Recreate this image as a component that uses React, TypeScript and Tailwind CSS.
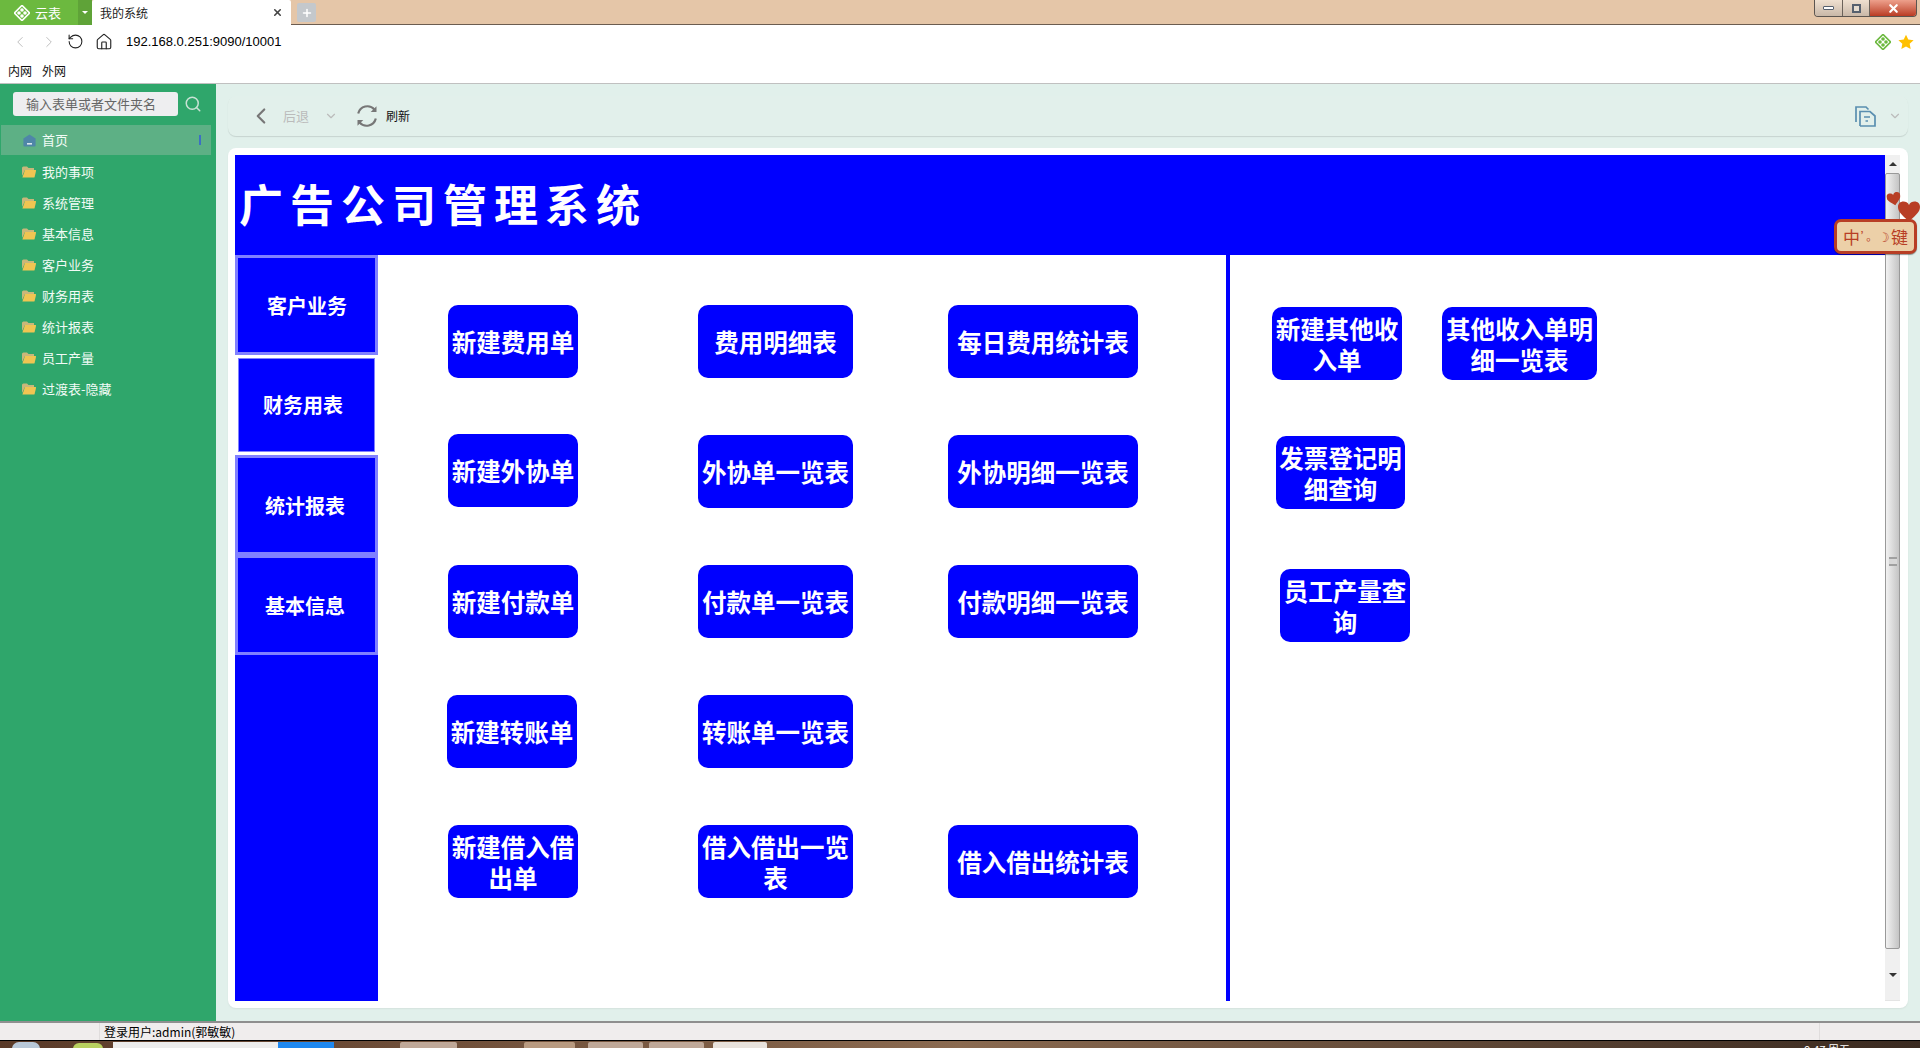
import { ChevronDown, ChevronLeft, ChevronRight, Home, RotateCcw, Search, X, Plus } from 'lucide-react';
import type { ReactNode } from 'react';

const menuItems = ['我的事项', '系统管理', '基本信息', '客户业务', '财务用表', '统计报表', '员工产量', '过渡表-隐藏'];

const leftRows = [
  [
    { label: '新建费用单', width: 'w-[130px]' },
    { label: '费用明细表', width: 'w-[155px]' },
    { label: '每日费用统计表', width: 'w-[190px]' },
  ],
  [
    { label: '新建外协单', width: 'w-[130px]', extra: '-mt-px' },
    { label: '外协单一览表', width: 'w-[155px]' },
    { label: '外协明细一览表', width: 'w-[190px]' },
  ],
  [
    { label: '新建付款单', width: 'w-[130px]' },
    { label: '付款单一览表', width: 'w-[155px]' },
    { label: '付款明细一览表', width: 'w-[190px]' },
  ],
  [
    { label: '新建转账单', width: 'w-[130px]', extra: '-ml-px' },
    { label: '转账单一览表', width: 'w-[155px]' },
  ],
  [
    { label: '新建借入借出单', width: 'w-[130px]' },
    { label: '借入借出一览表', width: 'w-[155px]' },
    { label: '借入借出统计表', width: 'w-[190px]' },
  ],
];

function Logo({ size = 16 }: { size?: number }) {
  return (
    <svg width={size} height={size} viewBox="0 0 16 16">
      <rect x="2.6" y="2.6" width="10.8" height="10.8" transform="rotate(45 8 8)" fill="none" stroke="currentColor" strokeWidth="1.6" />
      <circle cx="8" cy="5" r="1.8" fill="currentColor" />
      <circle cx="8" cy="11" r="1.8" fill="currentColor" />
      <circle cx="5" cy="8" r="1.8" fill="currentColor" />
      <circle cx="11" cy="8" r="1.8" fill="currentColor" />
    </svg>
  );
}

function FolderIcon() {
  return (
    <svg width="14" height="12" viewBox="0 0 14 12">
      <path d="M0 2 Q0 0.5 1.5 0.5 H5 L6.5 2 H12 V4 H3 L0 10 Z" fill="#c9b77a" />
      <path d="M3 4 H13.6 Q14.2 4 14 5 L12.6 11 Q12.4 11.6 11.8 11.6 H0.4 Z" fill="#f0c552" />
    </svg>
  );
}

function HouseIcon() {
  return (
    <svg width="13" height="13" viewBox="0 0 13 13">
      <path d="M6.5 0.5 L12.6 4.6 V11.5 Q12.6 12.6 11.5 12.6 H1.5 Q0.4 12.6 0.4 11.5 V4.6 Z" fill="#4f86a8" />
      <rect x="4" y="9" width="5" height="1.6" fill="#dbe8ee" />
    </svg>
  );
}

function RefreshIcon() {
  return (
    <svg width="24" height="24" viewBox="0 0 24 24" fill="none" stroke="#777777" strokeWidth="2.2">
      <path d="M3.2 9.5 A9.4 9.4 0 0 1 19.5 5.6" />
      <path d="M20.8 14.5 A9.4 9.4 0 0 1 4.5 18.4" />
      <path d="M21.5 2.2 V8 H15.7 Z" fill="#777777" stroke="none" />
      <path d="M2.5 21.8 V16 H8.3 Z" fill="#777777" stroke="none" />
    </svg>
  );
}

function PagesIcon() {
  return (
    <svg width="21" height="21" viewBox="0 0 21 21" fill="none" stroke="#5a8fb0" strokeWidth="1.7">
      <path d="M1 16 V1 H11 L13.5 3.5" />
      <path d="M5 20 V5.5 H15 L20 10 V20 H5" />
      <path d="M9 11 H15 M10.5 15 H13" />
    </svg>
  );
}

function Heart({ className }: { className: string }) {
  return (
    <svg className={className} viewBox="0 0 20 18">
      <path d="M10 18 C3 12 0 9 0 5 C0 2 2 0 5 0 C7 0 9 1 10 3 C11 1 13 0 15 0 C18 0 20 2 20 5 C20 9 17 12 10 18 Z" fill="#b83e25" />
    </svg>
  );
}

function FuncButton({ label, width, extra = '' }: { label: string; width: string; extra?: string }) {
  return (
    <div className={`${width} ${extra} flex h-[73px] items-center justify-center rounded-[10px] bg-[#0000ff] text-center text-[24.5px] leading-[31px] font-bold text-white`}>
      {label}
    </div>
  );
}

function SideTab({ children, className }: { children: ReactNode; className: string }) {
  return <div className={`flex items-center justify-center bg-[#0000ff] text-[20px] font-bold text-white ${className}`}>{children}</div>;
}

function BrowserChrome() {
  return (
    <div className="shrink-0 bg-white">
      <div className="flex h-[25px] items-stretch border-b border-[#6b5c50] bg-[#e5c6a8]">
        <div className="flex h-[25px] w-[78px] items-center gap-[5px] bg-[#6cb93f] pl-[14px] text-[13px] text-white">
          <Logo />
          <span>云表</span>
        </div>
        <div className="flex h-[25px] w-[14px] items-center justify-center bg-[#5fa338]">
          <div className="h-0 w-0 border-x-[3px] border-t-[3px] border-x-transparent border-t-white" />
        </div>
        <div className="flex h-[25px] w-[199px] items-center justify-between rounded-t-[2px] bg-white pr-[8px] pl-[8px] text-[12px] text-[#222222]">
          <span>我的系统</span>
          <X size={11} strokeWidth={3.5} className="text-[#444444]" />
        </div>
        <div className="mt-[3px] ml-[6px] flex h-[19px] w-[19px] items-center justify-center rounded-[2px] bg-[#c4c8cc]">
          <Plus size={12} strokeWidth={3} className="text-white" />
        </div>
        <div className="ml-auto mr-[3px] flex h-[17px] w-[103px] overflow-hidden rounded-b-[4px] border border-t-0 border-[#5c5550] text-[#56606e]">
          <div className="flex w-[28px] items-center justify-center border-r border-[#6b625a] bg-gradient-to-b from-[#efe0d0] to-[#c9b8a8]">
            <div className="h-[4px] w-[11px] rounded-[1px] border border-[#56606e] bg-white" />
          </div>
          <div className="flex w-[27px] items-center justify-center border-r border-[#6b625a] bg-gradient-to-b from-[#efe0d0] to-[#c9b8a8]">
            <div className="h-[9px] w-[9px] border-2 border-[#56606e] bg-[#e5dcd0]" />
          </div>
          <div className="flex flex-1 items-center justify-center bg-gradient-to-b from-[#eda08c] to-[#b93a22]">
            <X size={13} strokeWidth={4} className="text-white" />
          </div>
        </div>
      </div>
      <div className="flex h-[33px] items-center pr-[6px] pl-[11px] text-[13px] text-black">
        <ChevronLeft size={18} strokeWidth={1} className="text-[#aaaaaa]" />
        <ChevronRight size={18} strokeWidth={1} className="ml-[11px] text-[#aaaaaa]" />
        <RotateCcw size={17} strokeWidth={1.5} className="ml-[9px] text-[#222222]" />
        <Home size={18} strokeWidth={1.5} className="ml-[11px] text-[#222222]" />
        <span className="ml-[13px] font-['Liberation_Sans',sans-serif]">192.168.0.251:9090/10001</span>
        <span className="ml-auto text-[#6cb93f]">
          <Logo />
        </span>
        <svg width="16" height="16" viewBox="0 0 24 24" className="ml-[7px]">
          <path d="M12 1 L15.4 8.3 L23.4 9.3 L17.5 14.7 L19 22.6 L12 18.7 L5 22.6 L6.5 14.7 L0.6 9.3 L8.6 8.3 Z" fill="#ffc000" />
        </svg>
      </div>
      <div className="flex h-[26px] items-center gap-[10px] border-b border-[#c0c0c0] pl-[8px] text-[12px] text-[#111111]">
        <span>内网</span>
        <span>外网</span>
      </div>
    </div>
  );
}

function Sidebar() {
  return (
    <aside className="w-[216px] shrink-0 bg-[#2fa66b] pt-[8px] text-[13px] text-[#f2fbf6]">
      <div className="flex items-center pl-[13px]">
        <div className="flex h-[24px] w-[165px] items-center rounded-[3px] bg-[#eeeef0] pl-[13px] text-[#666666]">输入表单或者文件夹名</div>
        <Search size={18} strokeWidth={2} className="ml-[6px] text-[#c8e2d4]" />
      </div>
      <div className="mt-[9px] ml-px flex h-[30px] w-[210px] items-center bg-[#5db085] pr-[10px] pl-[22px]">
        <HouseIcon />
        <span className="ml-[6px]">首页</span>
        <div className="ml-auto h-[10px] w-[2px] bg-[#3c6fc4]" />
      </div>
      <div className="mt-[1px]">
        {menuItems.map((item) => (
          <div key={item} className="flex h-[31px] items-center pl-[22px]">
            <FolderIcon />
            <span className="ml-[6px]">{item}</span>
          </div>
        ))}
      </div>
    </aside>
  );
}

function Toolbar() {
  return (
    <div className="flex h-[40px] items-center rounded-[8px] bg-[#e2f0eb] pr-[6px] pl-[20px] shadow-[0_1px_1px_rgba(0,0,0,0.12)]">
      <ChevronLeft size={26} strokeWidth={2} className="text-[#777777]" />
      <span className="ml-[9px] text-[13px] text-[#bbbbbb]">后退</span>
      <ChevronDown size={14} strokeWidth={2} className="ml-[15px] text-[#bbbbbb]" />
      <div className="ml-[17px]">
        <RefreshIcon />
      </div>
      <span className="ml-[7px] text-[12px] text-[#111111]">刷新</span>
      <div className="ml-auto">
        <PagesIcon />
      </div>
      <ChevronDown size={14} strokeWidth={2} className="ml-[12px] text-[#bbbbbb]" />
    </div>
  );
}

function Scrollbar() {
  return (
    <div className="flex w-[15px] flex-col bg-[#f0f0f0]">
      <div className="flex h-[18px] items-center justify-center">
        <div className="h-0 w-0 border-x-[4px] border-b-[4px] border-x-transparent border-b-[#333333]" />
      </div>
      <div className="flex h-[776px] items-center justify-center rounded-[2px] border border-[#999999] bg-gradient-to-r from-[#f2f2f2] to-[#c4c4c4]">
        <div className="h-[9px] w-[8px] border-y-2 border-[#a0a0a0] bg-[#d8d8d8]" />
      </div>
      <div className="flex flex-1 items-center justify-center border-b border-[#e4e4e4]">
        <div className="h-0 w-0 border-x-[4px] border-t-[4px] border-x-transparent border-t-[#333333]" />
      </div>
    </div>
  );
}

function LeftPanel() {
  return (
    <div className="flex w-[143px] shrink-0 flex-col bg-white">
      <SideTab className="h-[100px] border-[3px] border-[#8080ff] pt-[1px] pl-[1px]">客户业务</SideTab>
      <div className="h-[100px] px-[3px] py-[3px]">
        <SideTab className="h-[94px] border border-[#8080ff] pr-[7px]">财务用表</SideTab>
      </div>
      <SideTab className="h-[100px] border-[3px] border-[#8080ff] pt-[2px] pr-[3px]">统计报表</SideTab>
      <SideTab className="h-[100px] border-[3px] border-[#8080ff] pt-[2px] pr-[3px]">基本信息</SideTab>
      <div className="flex-1 bg-[#0000ff]" />
    </div>
  );
}

function MainGrid() {
  return (
    <div className="flex w-[848px] shrink-0 flex-col gap-[57px] pt-[50px] pl-[70px]">
      {leftRows.map((row, i) => (
        <div key={i} className="grid h-[73px] grid-cols-[250px_250px_250px]">
          {row.map((b) => (
            <FuncButton key={b.label} {...b} />
          ))}
        </div>
      ))}
    </div>
  );
}

function RightPanel() {
  return (
    <div className="flex-1 border-l-4 border-[#0000ff] pt-[52px] pl-[42px]">
      <div className="flex gap-[40px]">
        <FuncButton label="新建其他收入单" width="w-[130px]" />
        <FuncButton label="其他收入单明细一览表" width="w-[155px]" />
      </div>
      <div className="mt-[56px] ml-[4px]">
        <FuncButton label="发票登记明细查询" width="w-[129px]" />
      </div>
      <div className="mt-[60px] ml-[8px]">
        <FuncButton label="员工产量查询" width="w-[130px]" />
      </div>
    </div>
  );
}

function ImeBadge() {
  return (
    <div className="absolute top-[192px] right-0 h-[63px] w-[86px]">
      <Heart className="absolute top-0 left-[53px] h-[14px] w-[14px] -rotate-12" />
      <Heart className="absolute top-[9px] left-[64px] h-[21px] w-[22px]" />
      <div className="absolute top-[27px] left-0 flex h-[35px] w-[83px] items-center justify-between rounded-[7px] border-[3px] border-[#b83e25] bg-[#ecd0a8] px-[6px] text-[17px] leading-none text-[#b83e25] shadow-[0_1px_1px_rgba(0,0,0,0.4)]">
        <span>中</span>
        <span className="text-[11px]">’。</span>
        <span className="text-[13px]">☽</span>
        <span>键</span>
      </div>
    </div>
  );
}

function Taskbar() {
  return (
    <div className="relative flex h-[8px] shrink-0 border-t border-black bg-gradient-to-r from-[#5a3a28] via-[#8a6a50] to-[#3a2a20]">
      <div className="mt-px ml-[12px] h-[7px] w-[28px] rounded-t-full bg-[#b8c8d8]" />
      <div className="mt-[2px] ml-[33px] h-[6px] w-[30px] rounded-t-full bg-[#b8d060]" />
      <div className="mt-px ml-[10px] h-[7px] w-[165px] bg-[#ececec]" />
      <div className="mt-px h-[7px] w-[56px] bg-[#1e88f0]" />
      <div className="mt-px ml-[66px] h-[7px] w-[57px] rounded-t-[2px] bg-[#bfa898]" />
      <div className="mt-px ml-[67px] h-[7px] w-[51px] rounded-t-[2px] bg-[#b89a80]" />
      <div className="mt-px ml-[13px] h-[7px] w-[55px] rounded-t-[2px] bg-[#bfa898]" />
      <div className="mt-px ml-[6px] h-[7px] w-[55px] rounded-t-[2px] bg-[#bfa898]" />
      <div className="mt-px ml-[9px] h-[7px] w-[54px] rounded-t-[2px] bg-[#e8e2dc]" />
      <span className="absolute top-0 right-[70px] text-[11px] leading-[16px] text-white">9:47 周五</span>
    </div>
  );
}

export default function App() {
  return (
    <div className="relative flex h-screen w-screen flex-col overflow-hidden bg-white font-['Noto_Sans_CJK_SC','Liberation_Sans',sans-serif]">
      <BrowserChrome />
      <div className="flex h-[937px] shrink-0">
        <Sidebar />
        <main className="flex-1 bg-[#e1f0eb] pt-[12px] pr-[12px] pl-[12px]">
          <Toolbar />
          <div className="mt-[12px] flex h-[860px] rounded-[8px] bg-white py-[7px] pr-[8px] pl-[7px] shadow-[0_1px_2px_rgba(0,0,0,0.06)]">
            <div className="flex w-[1650px] flex-col">
              <div className="flex h-[100px] shrink-0 items-center bg-[#0000ff] pb-[4px] pl-[4px] text-[44px] font-bold tracking-[7px] text-white">
                广告公司管理系统
              </div>
              <div className="flex flex-1">
                <LeftPanel />
                <MainGrid />
                <RightPanel />
              </div>
            </div>
            <Scrollbar />
          </div>
        </main>
      </div>
      <div className="flex h-[19px] shrink-0 border-t-2 border-[#8f8f8f] bg-[#f0eded] text-[12px] leading-[17px] text-black">
        <div className="w-[100px] border-r border-[#e0dddd]" />
        <span className="ml-[4px]">登录用户:admin(郭敏敏)</span>
        <div className="ml-auto w-[101px] border-l border-[#e0dddd]" />
      </div>
      <Taskbar />
      <ImeBadge />
    </div>
  );
}
